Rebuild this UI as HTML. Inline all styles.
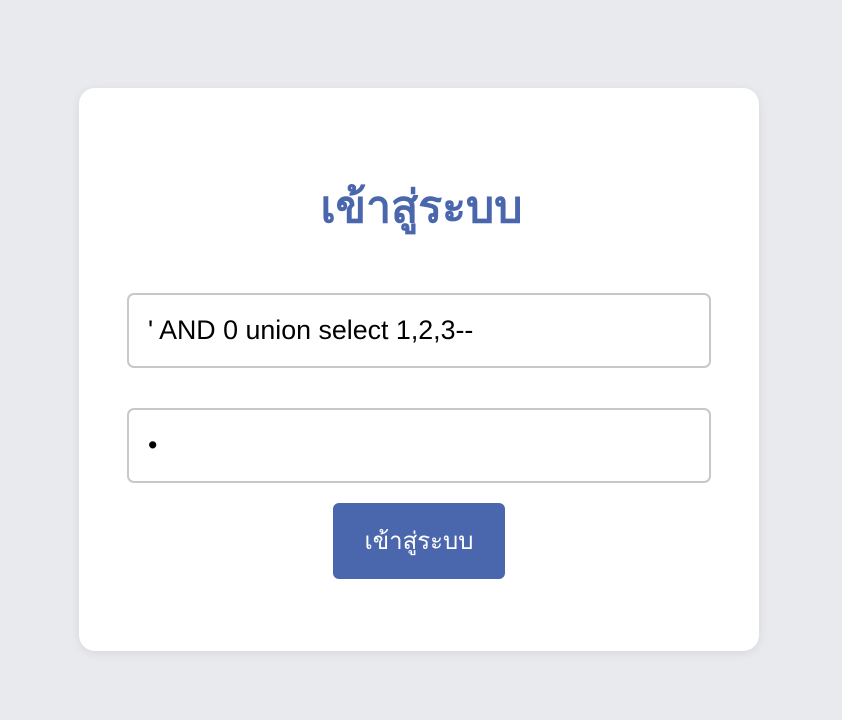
<!DOCTYPE html>
<html><head><meta charset="utf-8"><style>
html,body{margin:0;padding:0;width:842px;height:720px;background:#e9eaee;font-family:"Liberation Sans",sans-serif;overflow:hidden}
.card{position:absolute;left:79px;top:88px;width:680px;height:563px;background:#fff;border-radius:16px;box-shadow:0 2px 10px rgba(0,0,0,0.08)}
h1{position:absolute;left:1px;right:0;top:173px;margin:0;text-align:center;color:#4a66ad;font-size:44.5px;font-weight:bold;line-height:70px}
.inp{position:absolute;left:127px;width:580px;height:71px;border:2px solid #c8c8c8;border-radius:7px;box-sizing:content-box;font-size:26.8px;line-height:70px;color:#000}
.btn{position:absolute;left:333px;top:503px;width:172px;height:76px;background:#4a66ad;border-radius:6px;color:#fff;font-size:24px;text-align:center;line-height:78px}
</style></head><body>
<div class="card"></div>
<h1>เข้าสู่ระบบ</h1>
<div class="inp" style="top:293px"><span style="margin-left:19px">' AND 0 union select 1,2,3--</span></div>
<div class="inp" style="top:408px"><span style="margin-left:19px">•</span></div>
<div class="btn">เข้าสู่ระบบ</div>
</body></html>
